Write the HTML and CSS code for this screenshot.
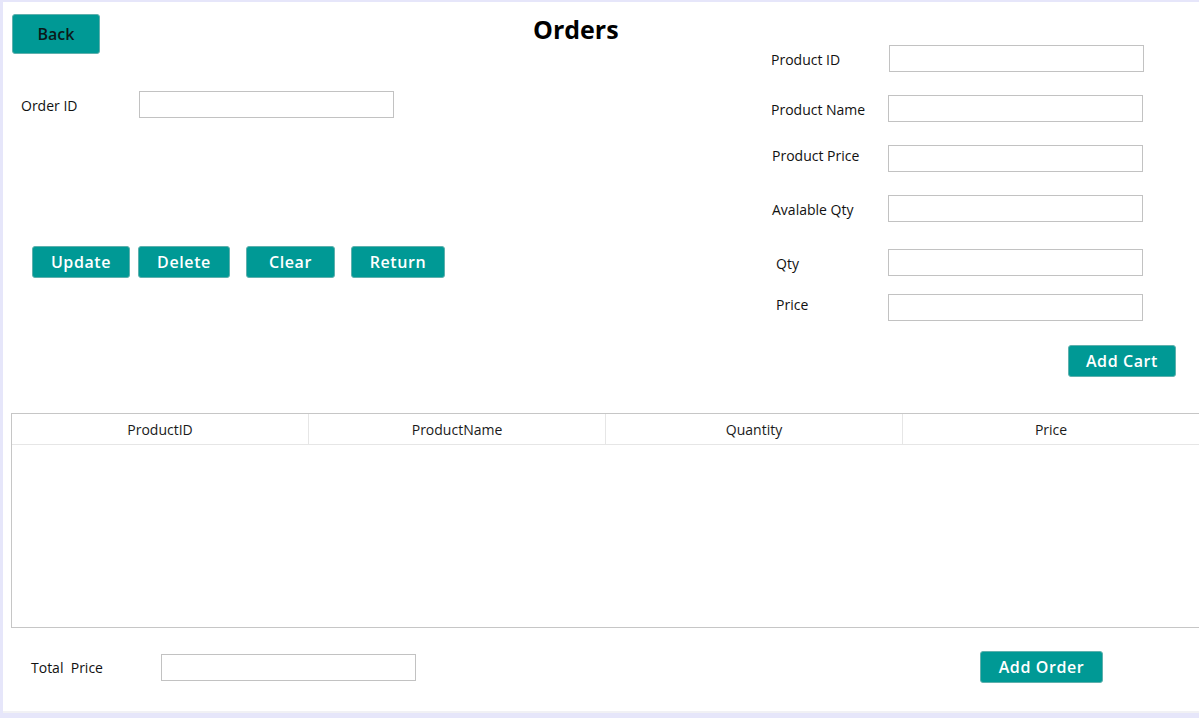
FILE: index.html
```html
<!DOCTYPE html>
<html>
<head>
<meta charset="utf-8">
<title>Orders</title>
<link rel="stylesheet" href="styles.css">
</head>
<body>
<div class="window">
  <div class="top">
    <div class="left">
      <div class="head-row">
        <button class="btn btn-back">Back</button>
        <h1 class="title">Orders</h1>
      </div>
      <div class="order-row">
        <label class="lbl order-lbl">Order ID</label>
        <input class="field" type="text">
      </div>
      <div class="actions">
        <button class="btn btn-act w-update">Update</button>
        <button class="btn btn-act w-delete">Delete</button>
        <button class="btn btn-act w-clear">Clear</button>
        <button class="btn btn-act w-return">Return</button>
      </div>
    </div>
    <div class="right">
      <div class="frow"><label class="lbl">Product ID</label><input class="field shift" type="text"></div>
      <div class="frow g23"><label class="lbl">Product Name</label><input class="field" type="text"></div>
      <div class="frow g23"><label class="lbl up nudge">Product Price</label><input class="field" type="text"></div>
      <div class="frow g23"><label class="lbl nudge">Avalable Qty</label><input class="field" type="text"></div>
      <div class="frow g27"><label class="lbl indent">Qty</label><input class="field" type="text"></div>
      <div class="frow g18"><label class="lbl up indent">Price</label><input class="field" type="text"></div>
      <div class="cart-row"><button class="btn btn-act w-cart">Add Cart</button></div>
    </div>
  </div>
  <div class="table">
    <div class="thead">
      <div class="th">ProductID</div>
      <div class="th">ProductName</div>
      <div class="th">Quantity</div>
      <div class="th">Price</div>
    </div>
  </div>
  <div class="bottom">
    <label class="lbl total-lbl">Total&nbsp; Price</label>
    <input class="field" type="text">
    <button class="btn btn-act w-order">Add Order</button>
  </div>
</div>
</body>
</html>
```
FILE: styles.css
```css
html, body {
  margin: 0;
  padding: 0;
  background: #ffffff;
}
body {
  font-family: "Open Sans", "Noto Sans", sans-serif;
  color: #000;
}
.window {
  width: 1199px;
  height: 718px;
  box-sizing: border-box;
  border-top: 2px solid #e6e6fa;
  border-left: 3px solid #e6e6fa;
  border-bottom: 5px solid #e6e6fa;
  overflow: hidden;
  background: #fff;
  box-shadow: inset 0 -2px 0 #f1f1f4;
}
.top {
  display: grid;
  grid-template-columns: 747px 1fr;
}
.left {
  display: flex;
  flex-direction: column;
}
.head-row {
  display: flex;
  align-items: flex-start;
  padding-top: 12px;
}
.btn {
  font-family: "Open Sans", "Noto Sans", sans-serif;
  background: #009995;
  border: 1px solid #5fb0ad;
  border-radius: 3px;
  padding: 0;
  cursor: pointer;
}
.btn-back {
  margin-left: 9px;
  width: 88px;
  height: 40px;
  font-size: 16px;
  font-weight: 600;
  color: #0b1a1a;
}
.title {
  margin: -1px 0 0 433px;
  font-size: 25px;
  line-height: 32px;
  font-weight: 700;
  color: #000;
}
.lbl {
  font-size: 14px;
  line-height: 20px;
  padding-top: 2px;
  color: #111;
}
.lbl.up {
  padding-top: 0;
  padding-bottom: 6px;
}
.field {
  box-sizing: border-box;
  width: 255px;
  height: 27px;
  border: 1px solid #c2c2c2;
  border-radius: 0;
  background: #fff;
  margin: 0;
  padding: 0 4px;
  font-family: inherit;
}
.order-row {
  display: flex;
  align-items: center;
  margin-top: 37px;
}
.order-lbl {
  box-sizing: border-box;
  width: 136px;
  padding-left: 18px;
}
.actions {
  display: flex;
  margin-top: 128px;
  padding-left: 29px;
}
.btn-act {
  height: 32px;
  color: #fff;
  font-size: 16px;
  font-weight: 600;
  letter-spacing: 0.6px;
}
.w-update { width: 98px; }
.w-delete { width: 92px; margin-left: 8px; }
.w-clear { width: 89px; margin-left: 16px; }
.w-return { width: 94px; margin-left: 16px; }
.right {
  display: flex;
  flex-direction: column;
  padding-top: 43px;
}
.frow {
  display: grid;
  grid-template-columns: 117px 255px;
  align-items: center;
  padding-left: 21px;
}
.g23 { margin-top: 23px; }
.g27 { margin-top: 27px; }
.g18 { margin-top: 18px; }
.shift { margin-left: 1px; }
.nudge { padding-left: 1px; }
.indent { padding-left: 5px; }
.cart-row {
  display: flex;
  justify-content: flex-end;
  margin-top: 24px;
  padding-right: 23px;
}
.w-cart { width: 108px; }
.table {
  box-sizing: border-box;
  margin-top: 36px;
  margin-left: 8px;
  width: 1200px;
  height: 215px;
  border: 1px solid #c6c6c6;
}
.thead {
  display: grid;
  grid-template-columns: 297px 297px 297px 297px;
  height: 30px;
  border-bottom: 1px solid #e6e6e6;
}
.th {
  display: flex;
  align-items: center;
  justify-content: center;
  font-size: 14px;
  color: #1a1a1a;
  border-right: 1px solid #e6e6e6;
}
.bottom {
  display: flex;
  align-items: center;
  margin-top: 23px;
  height: 32px;
}
.total-lbl {
  box-sizing: border-box;
  width: 158px;
  padding-left: 28px;
}
.w-order {
  width: 123px;
  margin-left: 564px;
}
```
